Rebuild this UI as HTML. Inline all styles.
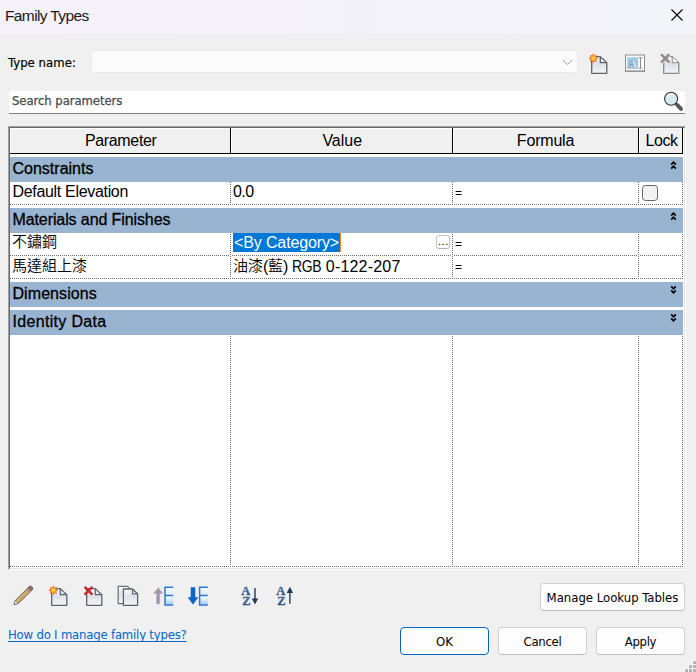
<!DOCTYPE html>
<html lang="en">
<head>
<meta charset="utf-8">
<title>Family Types</title>
<style>
*{box-sizing:border-box;margin:0;padding:0}
html,body{width:696px;height:672px;overflow:hidden;background:#f0f0f0}
body{position:relative;font-family:"Liberation Sans","Noto Sans CJK TC",sans-serif;color:#000;font-size:15px}
.abs{position:absolute}
.t{position:absolute;white-space:nowrap;line-height:1}
.dj{font-family:"DejaVu Sans Condensed","DejaVu Sans","Liberation Sans",sans-serif;font-size:13px}
#titlebar{left:0;top:0;width:696px;height:34px;background:linear-gradient(to right,#f7f1f9,#f4f2f9 50%,#f3f3fa)}
#title{left:5px;top:8px;font-size:15.5px;letter-spacing:-0.62px;color:#1a1a1a}
#tn{left:8px;top:56px;letter-spacing:0.05px;-webkit-text-stroke:0.18px #000}
#combo{left:91px;top:50px;width:487px;height:23px;background:#fbfbfb;border:1px solid #ececec;border-radius:3px}
#search{left:9px;top:91px;width:676px;height:23px;background:#fff;border-bottom:1px solid #7f7f7f;border-radius:2px 2px 0 0}
#searchtxt{left:12px;top:94px;color:#4a4a4a;-webkit-text-stroke:0.25px #4a4a4a;letter-spacing:-0.08px}
#grid{left:8px;top:126px;width:678px;height:444px;background:#fff;border:1px solid;border-color:#a0a0a0 #fff #fff #a0a0a0}
#grid::after{content:"";position:absolute;left:0;top:0;right:0;bottom:0;border:1px solid;border-color:#696969 #e3e3e3 #e3e3e3 #696969}
.hd{top:128px;height:26px;background:#f0f0f0;box-shadow:inset 1px 1px 0 #fff;border-right:1px solid #000;border-bottom:1px solid #000;text-align:center;font-size:16px;line-height:25px}
.band{left:10px;width:673px;height:25px;background:#99b4d1}
.bt{font-size:16px;left:12.5px;-webkit-text-stroke:0.3px #000}
.row{left:10px;width:673px;height:1px;background-image:linear-gradient(to right,#6a6a6a 1px,transparent 1px);background-size:2px 1px}
.cell{font-size:16px}
.cj{font-size:15px;position:relative;top:-1px;font-weight:350}
.t.cj{position:absolute;top:auto}
.vl{width:1px;background-color:#fff;background-image:linear-gradient(to bottom,#6a6a6a 1px,transparent 1px);background-size:1px 2px}
.btn{height:28px;border:1px solid #d0d0d0;border-bottom-color:#bcbcbc;border-radius:4px;background:#fdfdfd;text-align:center;line-height:27px}
#link{left:8px;top:628px;color:#0066cc;text-decoration:underline;text-decoration-thickness:1px;text-underline-offset:2px;text-decoration-skip-ink:none;letter-spacing:-0.2px}
.chev{position:absolute;left:670px}
</style>
</head>
<body>
<svg width="0" height="0" style="position:absolute">
<defs>
<linearGradient id="gdoc" x1="0" y1="0" x2="0" y2="1"><stop offset="0" stop-color="#fdfdfe"/><stop offset="0.45" stop-color="#dfe1e9"/><stop offset="1" stop-color="#f4f5f8"/></linearGradient>
<radialGradient id="gstar" cx="0.5" cy="0.5" r="0.5"><stop offset="0" stop-color="#ffe98a"/><stop offset="0.35" stop-color="#fbb42a"/><stop offset="0.7" stop-color="#f2761a"/><stop offset="1" stop-color="#dd3a1c"/></radialGradient>
<linearGradient id="gE" x1="0" y1="0" x2="0" y2="1"><stop offset="0" stop-color="#ffffff"/><stop offset="1" stop-color="#a9d0f2"/></linearGradient>
<linearGradient id="gAZ" x1="0" y1="0" x2="0" y2="1"><stop offset="0" stop-color="#6a97cc"/><stop offset="1" stop-color="#1d3a66"/></linearGradient>
<g id="doc"><path d="M3.7 3.6H12.3L18.8 9.7V20.3H3.7Z" fill="url(#gdoc)" stroke="#5e626a" stroke-width="1.3" stroke-linejoin="round"/><path d="M12.3 3.9V9.6H18.5" fill="none" stroke="#5e626a" stroke-width="1.3"/></g>
<g id="star"><path d="M5.40 0.50L6.59 2.44L8.79 1.91L8.26 4.11L10.20 5.30L8.26 6.49L8.79 8.69L6.59 8.16L5.40 10.10L4.21 8.16L2.01 8.69L2.54 6.49L0.60 5.30L2.54 4.11L2.01 1.91L4.21 2.44Z" fill="url(#gstar)"/></g>
</defs></svg>
<div id="titlebar" class="abs"></div>
<div id="title" class="t">Family Types</div>
<svg class="abs" style="left:671px;top:9px" width="12" height="12" viewBox="0 0 12 12"><path d="M0.5 0.5L11.5 11.5M11.5 0.5L0.5 11.5" stroke="#000" stroke-width="1.1" fill="none"/></svg>

<div id="tn" class="t dj">Type name:</div>
<div id="combo" class="abs"></div>
<svg class="abs" style="left:562px;top:59px" width="11" height="7" viewBox="0 0 11 7"><path d="M1 1L5.5 5.5L10 1" stroke="#a0a0a0" stroke-width="1" fill="none"/></svg>

<svg class="abs" style="left:588px;top:53px" width="24" height="24" viewBox="0 0 24 24"><use href="#doc"/><use href="#star"/></svg>
<svg class="abs" style="left:624px;top:53px" width="24" height="24" viewBox="0 0 24 24"><rect x="1.5" y="2" width="19" height="16.5" fill="#fff" stroke="#8c8c8c" stroke-width="1"/><rect x="2" y="17.2" width="18" height="1.2" fill="#a8a8a8"/><rect x="3.2" y="4.3" width="11" height="11.4" fill="#9cc9ec"/><text x="8.5" y="15.2" font-family="Liberation Serif,serif" font-size="13.5" font-weight="bold" fill="#fff" text-anchor="middle" stroke="#8e98a4" stroke-width="0.5">A</text><path d="M14.6 4.8H18.4M16.5 4.8V15.2M14.6 15.2H18.4" stroke="#8a8a8a" stroke-width="1" fill="none"/></svg>
<svg class="abs" style="left:660px;top:53px" width="24" height="24" viewBox="0 0 24 24"><path d="M3.7 3.6H12.3L18.8 9.7V20.3H3.7Z" fill="url(#gdoc)" stroke="#8c8c8c" stroke-width="1.3" stroke-linejoin="round"/><path d="M12.3 3.9V9.6H18.5" fill="#fff" stroke="#9a9a9a" stroke-width="1.2"/><path d="M1.4 1.6L9 9.2M9 1.6L1.4 9.2" stroke="#f0f0f0" stroke-width="4" fill="none"/><path d="M1.4 1.6L9 9.2M9 1.6L1.4 9.2" stroke="#8c8c8c" stroke-width="2.6" fill="none"/><g fill="#d9534a"><circle cx="1.2" cy="1.4" r="0.6"/><circle cx="9.2" cy="1.4" r="0.6"/><circle cx="1.2" cy="9.4" r="0.6"/><circle cx="9.2" cy="9.4" r="0.6"/><circle cx="7.6" cy="5.4" r="0.5"/><circle cx="5.2" cy="7.8" r="0.5"/></g></svg>

<div id="search" class="abs"></div>
<div id="searchtxt" class="t dj">Search parameters</div>
<svg class="abs" style="left:662px;top:90px" width="24" height="24" viewBox="0 0 24 24"><path d="M13.4 13.2L18.6 18.4" stroke="#4a4a4a" stroke-width="2.2" stroke-linecap="butt"/><path d="M15.4 15.2L19 18.8" stroke="#555" stroke-width="4" stroke-linecap="round"/><circle cx="9.1" cy="8.7" r="6.5" fill="#d8eaee" stroke="#303030" stroke-width="1.1"/><path d="M4.8 7.6A4.6 4.6 0 0 1 8.8 4.2" stroke="#fff" stroke-width="1.2" fill="none" opacity="0.7"/></svg>

<div id="grid" class="abs"></div>
<div class="abs hd" style="left:10px;width:221px;letter-spacing:-0.33px;padding-left:1.5px">Parameter</div>
<div class="abs hd" style="left:231px;width:222px;letter-spacing:0;padding-left:1.5px">Value</div>
<div class="abs hd" style="left:453px;width:186px;letter-spacing:-0.2px">Formula</div>
<div class="abs hd" style="left:639px;width:44px;letter-spacing:-0.45px;padding-left:2px">Lock</div>

<div class="abs band" style="top:157px"></div>
<div class="t bt" style="top:161px;letter-spacing:0px">Constraints</div>
<div class="abs row" style="top:204px"></div>
<div class="t cell" style="left:12.5px;top:184px;letter-spacing:-0.32px">Default Elevation</div>
<div class="t cell" style="left:233px;top:184px;letter-spacing:-0.6px">0.0</div>
<div class="t" style="left:455px;top:187px;font-size:12px">=</div>

<div class="abs band" style="top:208px"></div>
<div class="t bt" style="top:212px;letter-spacing:-0.1px">Materials and Finishes</div>
<div class="abs row" style="top:255px"></div>
<div class="t cj" style="left:12px;top:234px">不鏽鋼</div>
<div class="abs" style="left:233px;top:233px;width:107px;height:19px;background:#0078d7"></div>
<div class="abs" style="left:340px;top:233px;width:1px;height:19px;background:#ff8728"></div>
<div class="t cell" style="left:234px;top:235px;color:#fff;letter-spacing:-0.13px">&lt;By Category&gt;</div>
<div class="t" style="left:455px;top:238px;font-size:12px">=</div>
<div class="abs row" style="top:278px"></div>
<div class="t cj" style="left:12px;top:258px">馬達組上漆</div>
<div class="t cell" style="left:233px;top:259px;letter-spacing:-0.3px"><span class="cj" style="letter-spacing:0">油漆</span>(<span class="cj" style="letter-spacing:0">藍</span>) <span style="display:inline-block;transform:scaleX(0.87);transform-origin:0 50%;margin-right:-4.4px">RGB</span> <span style="letter-spacing:0.2px">0-122-207</span></div>
<div class="t" style="left:455px;top:261px;font-size:12px">=</div>

<div class="abs band" style="top:282px"></div>
<div class="t bt" style="top:286px;letter-spacing:0.07px">Dimensions</div>
<div class="abs band" style="top:310px"></div>
<div class="t bt" style="top:314px;letter-spacing:0.32px">Identity Data</div>

<div class="abs vl" style="left:230px;top:182px;height:23px"></div>
<div class="abs vl" style="left:452px;top:182px;height:23px"></div>
<div class="abs vl" style="left:638px;top:182px;height:23px"></div>
<div class="abs vl" style="left:682px;top:182px;height:23px"></div>
<div class="abs vl" style="left:230px;top:233px;height:46px;background-position:0 1px"></div>
<div class="abs vl" style="left:452px;top:233px;height:46px;background-position:0 1px"></div>
<div class="abs vl" style="left:638px;top:233px;height:46px;background-position:0 1px"></div>
<div class="abs vl" style="left:682px;top:233px;height:46px;background-position:0 1px"></div>
<div class="abs vl" style="left:230px;top:335px;height:232px;background-position:0 1px"></div>
<div class="abs vl" style="left:452px;top:335px;height:232px;background-position:0 1px"></div>
<div class="abs vl" style="left:638px;top:335px;height:232px;background-position:0 1px"></div>
<div class="abs vl" style="left:682px;top:335px;height:232px;background-position:0 1px"></div>
<div class="abs row" style="top:566px"></div>

<div class="abs" style="left:642px;top:185px;width:16px;height:16px;border:1px solid #626262;border-radius:3.5px;background:#f3f3f3"></div>
<div class="abs" style="left:436px;top:235px;width:14px;height:14px;border:1px solid #c4c4c4;border-bottom-color:#b4b4b4;border-radius:3.5px;background:#fdfdfd"></div>
<div class="t" style="left:438px;top:235.5px;font-size:11px;letter-spacing:0.55px">...</div>

<svg class="chev" style="top:160.5px" width="7" height="9" viewBox="0 0 7 9"><path d="M1.2 3.6L3.5 1.2L5.8 3.6M1.2 7.6L3.5 5.2L5.8 7.6" stroke="#000" stroke-width="1.7" fill="none"/></svg>
<svg class="chev" style="top:211.5px" width="7" height="9" viewBox="0 0 7 9"><path d="M1.2 3.6L3.5 1.2L5.8 3.6M1.2 7.6L3.5 5.2L5.8 7.6" stroke="#000" stroke-width="1.7" fill="none"/></svg>
<svg class="chev" style="top:284.5px" width="7" height="9" viewBox="0 0 7 9"><path d="M1.2 1.4L3.5 3.8L5.8 1.4M1.2 5.4L3.5 7.8L5.8 5.4" stroke="#000" stroke-width="1.7" fill="none"/></svg>
<svg class="chev" style="top:312.5px" width="7" height="9" viewBox="0 0 7 9"><path d="M1.2 1.4L3.5 3.8L5.8 1.4M1.2 5.4L3.5 7.8L5.8 5.4" stroke="#000" stroke-width="1.7" fill="none"/></svg>
<div class="abs btn dj" style="left:540px;top:583px;width:145px">Manage Lookup Tables</div>
<div class="abs btn dj" style="left:400px;top:627px;width:89px;border-color:#0067c0">OK</div>
<div class="abs btn dj" style="left:498px;top:627px;width:89px;letter-spacing:-0.3px">Cancel</div>
<div class="abs btn dj" style="left:596px;top:627px;width:89px;letter-spacing:-0.35px">Apply</div>
<svg class="abs" style="left:12px;top:584px" width="24" height="24" viewBox="0 0 24 24"><path d="M2 20.6L3.4 16.4L16.2 3.6L19.4 6.8L6.4 19.4Z" fill="#cdae6c" stroke="#6a6a6a" stroke-width="1" stroke-linejoin="round"/><path d="M2 20.6L3.4 16.4L6.4 19.4Z" fill="#fff" stroke="#6a6a6a" stroke-width="0.8"/><path d="M16.2 3.6L17.6 2.3Q18.6 1.6 19.6 2.6L20.6 3.8Q21.2 4.8 20.4 5.6L19.4 6.8Z" fill="#a86a62" stroke="#5a5a5a" stroke-width="1"/><path d="M14.6 5.2L17.8 8.4" stroke="#8a8a8a" stroke-width="1.2"/></svg>
<svg class="abs" style="left:48px;top:585px" width="24" height="24" viewBox="0 0 24 24"><use href="#doc"/><use href="#star"/></svg>
<svg class="abs" style="left:82.5px;top:585px" width="24" height="24" viewBox="0 0 24 24"><use href="#doc"/><path d="M1.6 1.8L9.4 9.6M9.4 1.8L1.6 9.6" stroke="#cf2b2b" stroke-width="2.6" fill="none"/></svg>
<svg class="abs" style="left:116px;top:584px" width="24" height="24" viewBox="0 0 24 24"><path d="M2.2 2.4H11.5L15 6V19.6H2.2Z" fill="url(#gdoc)" stroke="#6a6e76" stroke-width="1.2" stroke-linejoin="round"/><path d="M7.4 5H16.5L21.6 9.8V21.4H7.4Z" fill="url(#gdoc)" stroke="#5e626a" stroke-width="1.3" stroke-linejoin="round"/><path d="M16.5 5.2V9.8H21.4" fill="none" stroke="#5e626a" stroke-width="1.2"/></svg>
<svg class="abs" style="left:152px;top:584px" width="24" height="24" viewBox="0 0 24 24"><path d="M6.2 3.6L1.6 9.4H4.6V20H7.8V9.4H10.8Z" fill="#9a9a9a" stroke="#c9a8e6" stroke-width="0.7"/><rect x="13.2" y="3.4" width="8" height="17.2" fill="url(#gE)"/><rect x="13.2" y="11.5" width="8" height="9" fill="url(#gE)"/><path d="M21.2 3.2H13V21H21.2M13 11.6H21.2" fill="none" stroke="#2a78cf" stroke-width="1.5"/></svg>
<svg class="abs" style="left:186px;top:584px" width="24" height="24" viewBox="0 0 24 24"><path d="M7 20.2L2.2 13.6H5V3.6H9V13.6H11.8Z" fill="#0f64c4" stroke="#0f64c4" stroke-width="0.6" stroke-linejoin="round"/><rect x="13.8" y="3.4" width="8" height="17.2" fill="url(#gE)"/><rect x="13.8" y="11.5" width="8" height="9" fill="url(#gE)"/><path d="M21.8 3.2H13.6V21H21.8M13.6 11.6H21.8" fill="none" stroke="#2a78cf" stroke-width="1.5"/></svg>
<svg class="abs" style="left:240px;top:584px" width="24" height="24" viewBox="0 0 24 24"><text x="5.7" y="10.5" font-family="Liberation Serif,serif" font-weight="bold" font-size="12.5" text-anchor="middle" fill="url(#gAZ)" stroke="#3d66a0" stroke-width="0.3">A</text><text x="6.3" y="21.3" font-family="Liberation Serif,serif" font-weight="bold" font-size="12.5" text-anchor="middle" fill="url(#gAZ)" stroke="#274a7c" stroke-width="0.3">Z</text><path d="M15 4V16" stroke="#1f3a60" stroke-width="1.4"/><path d="M11.8 14.4H18.2L15 20.6Z" fill="#1f3a60"/></svg>
<svg class="abs" style="left:275px;top:584px" width="24" height="24" viewBox="0 0 24 24"><text x="5.7" y="10.5" font-family="Liberation Serif,serif" font-weight="bold" font-size="12.5" text-anchor="middle" fill="url(#gAZ)" stroke="#3d66a0" stroke-width="0.3">A</text><text x="6.3" y="21.3" font-family="Liberation Serif,serif" font-weight="bold" font-size="12.5" text-anchor="middle" fill="url(#gAZ)" stroke="#274a7c" stroke-width="0.3">Z</text><path d="M14.9 7V19.8" stroke="#1f3a60" stroke-width="1.4"/><path d="M11.7 9H18.1L14.9 2.8Z" fill="#1f3a60"/></svg>
<svg class="abs" style="left:684px;top:660px" width="12" height="12" viewBox="0 0 12 12" shape-rendering="crispEdges"><g fill="#fafafa"><rect x="8" y="0" width="3" height="3"/><rect x="4" y="4" width="3" height="3"/><rect x="8" y="4" width="3" height="3"/><rect x="0" y="8" width="3" height="3"/><rect x="4" y="8" width="3" height="3"/><rect x="8" y="8" width="3" height="3"/></g><g fill="#b4b4b4"><rect x="9" y="1" width="3" height="3"/><rect x="5" y="5" width="3" height="3"/><rect x="9" y="5" width="3" height="3"/><rect x="1" y="9" width="3" height="3"/><rect x="5" y="9" width="3" height="3"/><rect x="9" y="9" width="3" height="3"/></g></svg>
<div id="link" class="t dj">How do I manage family types?</div>
</body>
</html>
